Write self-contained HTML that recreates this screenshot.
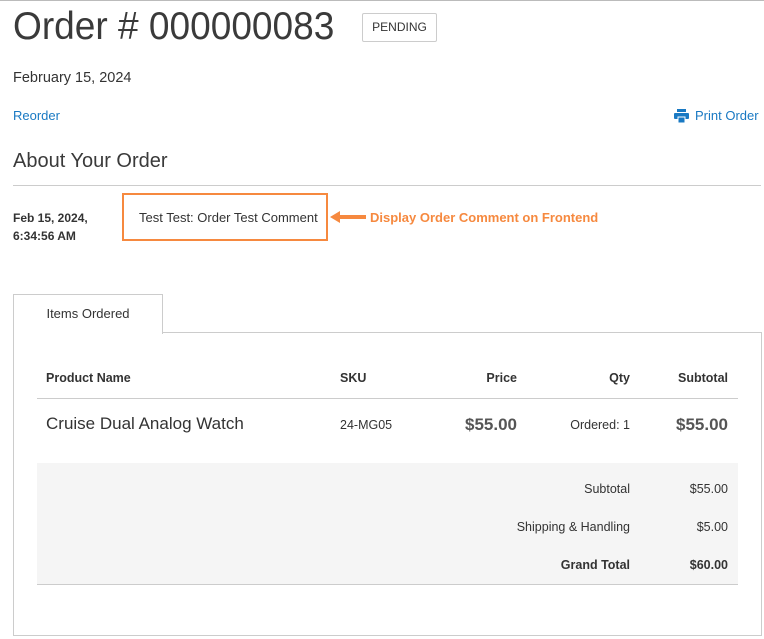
<!DOCTYPE html><html><head><style>
body{margin:0;width:764px;height:639px;background:#fff;font-family:"Liberation Sans",sans-serif;color:#333;position:relative;overflow:hidden}
.a{position:absolute;white-space:nowrap}
.s{transform-origin:0 0;display:inline-block}
.r{text-align:right}
</style></head><body>
<div class="a" style="left:0;top:0;width:764px;height:1px;background:#bbb"></div>
<div class="a" style="left:13px;top:5px;font-size:39px;font-weight:300;color:#3a3a3a"><span class="s" style="transform:scaleX(0.95)">Order # 000000083</span></div>
<div class="a" style="left:362px;top:13px;width:73px;height:27px;border:1px solid #ccc;border-radius:2px;font-size:12px;line-height:27px;text-align:center">PENDING</div>
<div class="a" style="left:13px;top:70px;font-size:14.5px">February 15, 2024</div>
<div class="a" style="left:13px;top:108px;font-size:13px;color:#1979c3">Reorder</div>
<svg class="a" style="left:674px;top:109px" width="15" height="14" viewBox="0 0 15 14"><rect x="3" y="0" width="9" height="3" fill="#1979c3"/><rect x="0" y="4" width="15" height="6" rx="1" fill="#1979c3"/><rect x="4" y="8" width="7" height="6" fill="#1979c3" stroke="#fff" stroke-width="1"/></svg>
<div class="a" style="left:695px;top:108px;font-size:13px;color:#1979c3">Print Order</div>
<div class="a" style="left:13px;top:150px;font-size:20px;color:#3a3a3a">About Your Order</div>
<div class="a" style="left:13px;top:185px;width:748px;height:1px;background:#ccc"></div>
<div class="a" style="left:13px;top:209px;font-size:12px;font-weight:bold;line-height:18px">Feb 15, 2024,<br>6:34:56 AM</div>
<div class="a" style="left:122px;top:193px;width:202px;height:44px;border:2px solid #f6893f"></div>
<div class="a" style="left:139px;top:210px;font-size:13px">Test Test: Order Test Comment</div>
<svg class="a" style="left:330px;top:210px" width="40" height="14"><polygon points="0,7 10,1 10,5 36,5 36,9 10,9 10,13" fill="#f6893f"/></svg>
<div class="a" style="left:370px;top:210px;font-size:13px;font-weight:bold;color:#f6893f">Display Order Comment on Frontend</div>
<div class="a" style="left:13px;top:332px;width:747px;height:302px;border:1px solid #ccc"></div>
<div class="a" style="left:13px;top:294px;width:148px;height:39px;border:1px solid #ccc;border-bottom:none;background:#fff;font-size:13px;line-height:38px;text-align:center">Items Ordered</div>
<div class="a" style="left:46px;top:371px;font-size:12.5px;font-weight:bold">Product Name</div>
<div class="a" style="left:340px;top:371px;font-size:12.5px;font-weight:bold">SKU</div>
<div class="a r" style="left:417px;width:100px;top:371px;font-size:12.5px;font-weight:bold">Price</div>
<div class="a r" style="left:530px;width:100px;top:371px;font-size:12.5px;font-weight:bold">Qty</div>
<div class="a r" style="left:628px;width:100px;top:371px;font-size:12.5px;font-weight:bold">Subtotal</div>
<div class="a" style="left:37px;top:398px;width:701px;height:1px;background:#ccc"></div>
<div class="a" style="left:46px;top:414px;font-size:17px">Cruise Dual Analog Watch</div>
<div class="a" style="left:340px;top:418px;font-size:12.5px">24-MG05</div>
<div class="a r" style="left:417px;width:100px;top:415px;font-size:17px;font-weight:bold;color:#555">$55.00</div>
<div class="a r" style="left:530px;width:100px;top:418px;font-size:12.5px">Ordered: 1</div>
<div class="a r" style="left:628px;width:100px;top:415px;font-size:17px;font-weight:bold;color:#555">$55.00</div>
<div class="a" style="left:37px;top:463px;width:701px;height:121px;background:#f5f5f5;border-bottom:1px solid #ccc"></div>
<div class="a r" style="left:430px;width:200px;top:482px;font-size:12.5px">Subtotal</div>
<div class="a r" style="left:628px;width:100px;top:482px;font-size:12.5px">$55.00</div>
<div class="a r" style="left:430px;width:200px;top:520px;font-size:12.5px">Shipping &amp; Handling</div>
<div class="a r" style="left:628px;width:100px;top:520px;font-size:12.5px">$5.00</div>
<div class="a r" style="left:430px;width:200px;top:558px;font-size:12.5px;font-weight:bold">Grand Total</div>
<div class="a r" style="left:628px;width:100px;top:558px;font-size:12.5px;font-weight:bold">$60.00</div>
</body></html>
